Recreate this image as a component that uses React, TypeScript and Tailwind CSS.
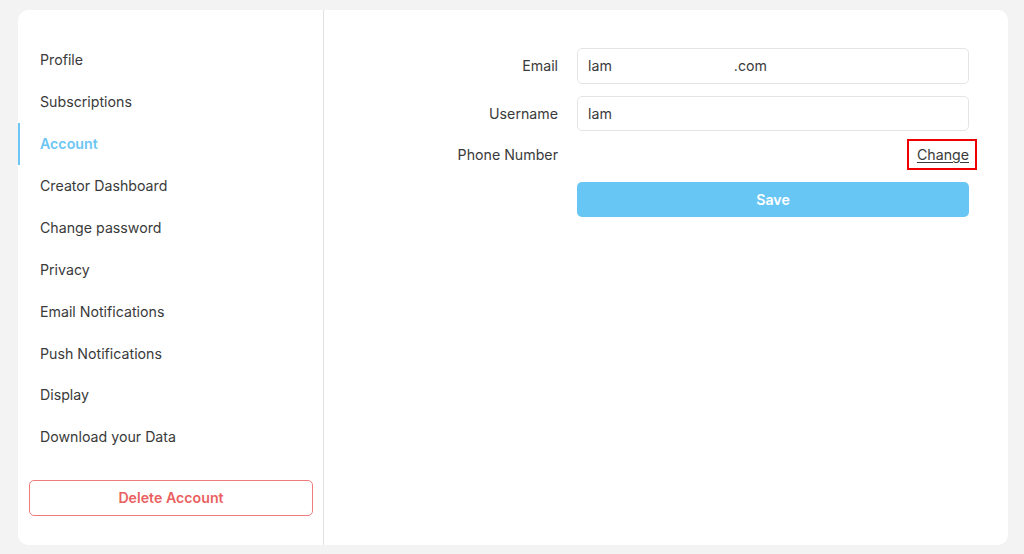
const navItems = [
  'Profile',
  'Subscriptions',
  'Account',
  'Creator Dashboard',
  'Change password',
  'Privacy',
  'Email Notifications',
  'Push Notifications',
  'Display',
  'Download your Data',
];

export default function App() {
  const active = 'Account';

  return (
    <div className="w-[1024px] h-[554px] bg-[#f3f3f3] pt-[10px] pl-[18px] pr-[16px] font-['Inter','Noto_Sans',sans-serif] text-[14.2px] text-[#3a3a3a]">
      <div className="h-[535px] bg-white rounded-[10px] flex overflow-hidden">
        <aside className="w-[306px] shrink-0 border-r border-[#e2e2e2] flex flex-col pt-[29px]">
          <nav className="flex flex-col">
            {navItems.map((item) => (
              <a
                key={item}
                href="#"
                className={`h-[41.9px] flex items-center pl-[20px] border-l-2 ${
                  item === active
                    ? 'border-[#6bc6f3] text-[#6bc6f3] font-semibold'
                    : 'border-transparent text-[#3a3a3a]'
                }`}
              >
                {item}
              </a>
            ))}
          </nav>
          <div className="pl-[11px] pr-[10px] mt-[22px]">
            <button
              type="button"
              className="w-full h-[36px] rounded-[5px] border border-[#f07b7b] text-[#ea5f5f] font-semibold"
            >
              Delete Account
            </button>
          </div>
        </aside>

        <main className="flex-1 min-w-0 pt-[38px] pr-[39px]">
          <div className="grid grid-cols-[234px_1fr] gap-x-[19px] items-center">
            <label className="text-right">Email</label>
            <div className="h-[36px] rounded-[5px] border border-[#e4e4e4] flex items-center px-[10px]">
              <span>lam</span>
              <span className="inline-block w-[122px]" />
              <span>.com</span>
            </div>

            <label className="text-right mt-[12px]">Username</label>
            <div className="h-[35px] mt-[12px] rounded-[5px] border border-[#e4e4e4] flex items-center px-[10px]">
              lam
            </div>

            <label className="text-right mt-[12px] leading-[24px]">Phone Number</label>
            <div className="mt-[12px] h-[24px] flex items-center justify-end">
              <span className="relative">
                <a href="#" className="underline underline-offset-2 text-[#3a3a3a]">
                  Change
                </a>
                <span className="absolute -left-[10px] -right-[8px] -top-[5px] h-[31px] border-2 border-[#ee0000] pointer-events-none" />
              </span>
            </div>

            <div />
            <button
              type="button"
              className="mt-[15px] h-[35px] rounded-[5px] bg-[#68c6f4] text-white font-semibold"
            >
              Save
            </button>
          </div>
        </main>
      </div>
    </div>
  );
}
